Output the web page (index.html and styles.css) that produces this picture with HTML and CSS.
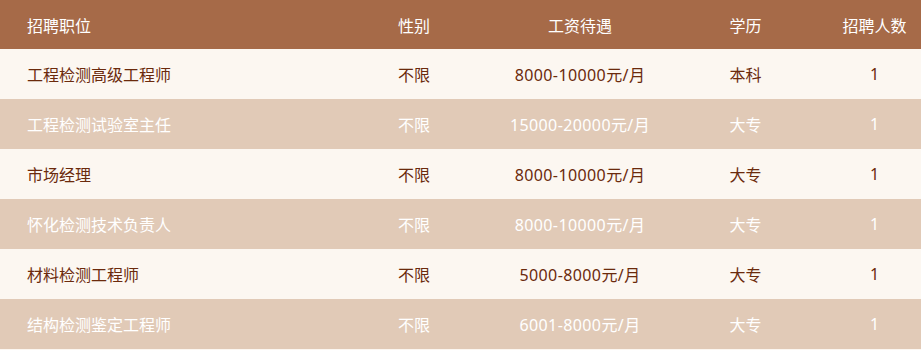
FILE: index.html
```html
<!DOCTYPE html>
<html lang="zh">
<head>
<meta charset="utf-8">
<link rel="stylesheet" href="styles.css">
</head>
<body>
<div class="jobs">
  <div class="row head">
    <div class="c name">招聘职位</div><div class="c">性别</div><div class="c">工资待遇</div><div class="c">学历</div><div class="c">招聘人数</div>
  </div>
  <div class="row light">
    <div class="c name">工程检测高级工程师</div><div class="c">不限</div><div class="c sal">8000-10000元/月</div><div class="c">本科</div><div class="c">1</div>
  </div>
  <div class="row dark">
    <div class="c name">工程检测试验室主任</div><div class="c">不限</div><div class="c sal">15000-20000元/月</div><div class="c">大专</div><div class="c">1</div>
  </div>
  <div class="row light">
    <div class="c name">市场经理</div><div class="c">不限</div><div class="c sal">8000-10000元/月</div><div class="c">大专</div><div class="c">1</div>
  </div>
  <div class="row dark">
    <div class="c name">怀化检测技术负责人</div><div class="c">不限</div><div class="c sal">8000-10000元/月</div><div class="c">大专</div><div class="c">1</div>
  </div>
  <div class="row light">
    <div class="c name">材料检测工程师</div><div class="c">不限</div><div class="c sal">5000-8000元/月</div><div class="c">大专</div><div class="c">1</div>
  </div>
  <div class="row dark">
    <div class="c name">结构检测鉴定工程师</div><div class="c">不限</div><div class="c sal">6001-8000元/月</div><div class="c">大专</div><div class="c">1</div>
  </div>
</div>
</body>
</html>
```
FILE: styles.css
```css
html, body {
  margin: 0;
  padding: 0;
  background: #fcf7f1;
}
.jobs {
  width: 921px;
  font-family: "Noto Sans", "Noto Sans CJK SC", sans-serif;
  font-size: 16px;
}
.row {
  display: grid;
  grid-template-columns: 331px 166px 166px 165px 93px;
  height: 50px;
  align-items: center;
}
.row.head {
  height: 49px;
  background: #a66a48;
  color: #ffffff;
}
.row.light {
  background: #fcf7f1;
  color: #6b2a0c;
}
.row.dark {
  background: #e1cab7;
  color: #ffffff;
}
.c {
  text-align: center;
  white-space: nowrap;
}
.c.sal {
  letter-spacing: 0.4px;
}
.c.name {
  text-align: left;
  padding-left: 27px;
}
```
